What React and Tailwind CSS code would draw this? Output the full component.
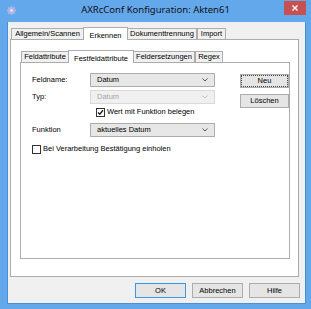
import React from "react";

const F = { fontFamily: '"Liberation Sans", Arial, sans-serif' };

function Chevron({ disabled }) {
  return (
    <svg width="6" height="4" viewBox="0 0 6 4" className="shrink-0">
      <polyline points="0.5,0.5 3,3 5.5,0.5" fill="none" stroke={disabled ? "#c4c4c4" : "#555"} strokeWidth="1" />
    </svg>
  );
}

function Select({ value, disabled }) {
  return (
    <div
      className={`flex items-center justify-between h-[14px] w-[125px] border pl-[6px] pr-[6px] text-[7.5px] ${
        disabled ? "border-[#d9d9d9] bg-[#f0f0f0] text-[#a6a6a6]" : "border-[#acacac] bg-[#e7e7e7] text-black"
      }`}
    >
      <span>{value}</span>
      <Chevron disabled={disabled} />
    </div>
  );
}

function Check({ checked }) {
  return (
    <div className="w-[9px] h-[9px] border border-[#333] bg-white flex items-center justify-center shrink-0">
      {checked && (
        <svg width="7" height="7" viewBox="0 0 7 7">
          <polyline points="1,3.5 2.8,5.3 6,1.2" fill="none" stroke="#222" strokeWidth="1.4" />
        </svg>
      )}
    </div>
  );
}

function Btn({ children, w = "w-[49px]", h = "h-[14px]", def, focus }) {
  return (
    <div
      className={`${w} ${h} flex items-center justify-center border text-[7.5px] text-black bg-[#e5e5e5] ${
        def ? "border-[#3c97e8]" : "border-[#acacac]"
      } ${focus ? "outline-1 outline-dotted outline-[#444] outline-offset-[-2px]" : ""}`}
    >
      {children}
    </div>
  );
}

function Tab({ label, selected, w }) {
  return selected ? (
    <div
      className={`${w} h-[13px] -mb-px mx-[-1px] relative z-10 bg-white border border-b-0 border-[#acacac] flex items-start justify-center pt-[2px] text-[7.5px] text-black`}
    >
      {label}
    </div>
  ) : (
    <div
      className={`${w} h-[11px] bg-[#f0f0f0] border border-b-0 border-[#acacac] flex items-center justify-center text-[7.5px] text-black`}
    >
      {label}
    </div>
  );
}

export default function App() {
  return (
    <div className="w-[311px] h-[309px] bg-[#64a8ec] flex flex-col overflow-hidden" style={F}>
      {/* Title bar */}
      <div className="h-[22px] flex items-start relative shrink-0">
        <div className="absolute left-[7px] top-[6px]">
          <svg width="9" height="9" viewBox="0 0 10 10">
            <g fill="#b7b4e6">
              <circle cx="5" cy="5" r="3.3" />
              <rect x="4" y="0" width="2" height="10" />
              <rect x="0" y="4" width="10" height="2" />
              <rect x="4" y="0" width="2" height="10" transform="rotate(45 5 5)" />
              <rect x="4" y="0" width="2" height="10" transform="rotate(-45 5 5)" />
            </g>
            <circle cx="5" cy="5" r="1.5" fill="#e8e8f8" />
          </svg>
        </div>
        <div
          className="flex-1 text-center text-[9.5px] text-[#111] pt-[3px]"
          style={{ fontFamily: '"Noto Sans", "Open Sans", sans-serif' }}
        >
          AXRcConf Konfiguration: Akten61
        </div>
        <div className="absolute left-[284px] top-[1px] w-[22px] h-[14px] bg-[#c75050] flex items-center justify-center">
          <svg width="6" height="6" viewBox="0 0 6 6">
            <path d="M0.5 0.5 L5.5 5.5 M5.5 0.5 L0.5 5.5" stroke="#fff" strokeWidth="1.4" />
          </svg>
        </div>
      </div>

      {/* Client area */}
      <div className="ml-[7px] mr-[5px] mb-[5px] flex-1 bg-[#f0f0f0] border-l border-r border-b border-[#4b8fd8] border-l-[#4b8fd8] flex flex-col pl-[2px]">
        {/* Outer tabs */}
        <div className="mt-[5px] flex items-end h-[12px] pl-[1px] relative">
          <Tab label="Allgemein/Scannen" w="w-[73px]" />
          <Tab label="Erkennen" selected w="w-[45px]" />
          <Tab label="Dokumenttrennung" w="w-[70px]" />
          <Tab label="Import" w="w-[29px]" />
        </div>
        {/* Outer panel */}
        <div className="w-[289px] h-[238px] bg-white border border-[#acacac] flex flex-col pl-[9px] pt-[9px]">
          {/* Inner tabs */}
          <div className="flex items-end h-[13px] pl-[1px] relative">
            <Tab label="Feldattribute" w="w-[48px]" />
            <Tab label="Festfeldattribute" selected w="w-[66px]" />
            <Tab label="Feldersetzungen" w="w-[62px]" />
            <Tab label="Regex" w="w-[28px]" />
          </div>
          {/* Inner panel */}
          <div className="w-[270px] h-[197px] bg-white border border-[#acacac] flex pl-[11px] pt-[10px]">
            <div className="flex flex-col w-[195px]">
              <div className="flex items-center h-[14px]">
                <span className="w-[58px] text-[7.5px] text-black">Feldname:</span>
                <Select value="Datum" />
              </div>
              <div className="flex items-center h-[14px] mt-[3px]">
                <span className="w-[58px] text-[7.5px] text-black">Typ:</span>
                <Select value="Datum" disabled />
              </div>
              <div className="flex items-center h-[10px] mt-[3px] pl-[64px] gap-[2px]">
                <Check checked />
                <span className="text-[7.5px] text-black">Wert mit Funktion belegen</span>
              </div>
              <div className="flex items-center h-[14px] mt-[6px]">
                <span className="w-[58px] text-[7.5px] text-black">Funktion</span>
                <Select value="aktuelles Datum" />
              </div>
              <div className="flex items-center h-[10px] mt-[7px] gap-[2px]">
                <Check />
                <span className="text-[7.5px] text-black">Bei Verarbeitung Bestätigung einholen</span>
              </div>
            </div>
            <div className="flex flex-col ml-[14px] pt-[1px] gap-[6px]">
              <Btn focus>Neu</Btn>
              <Btn>Löschen</Btn>
            </div>
          </div>
        </div>
        {/* Bottom buttons */}
        <div className="flex justify-end gap-[6px] mt-[6px] pr-[5px]">
          <Btn w="w-[51px]" h="h-[15px]" def>OK</Btn>
          <Btn w="w-[51px]" h="h-[15px]">Abbrechen</Btn>
          <Btn w="w-[51px]" h="h-[15px]">Hilfe</Btn>
        </div>
      </div>
    </div>
  );
}
